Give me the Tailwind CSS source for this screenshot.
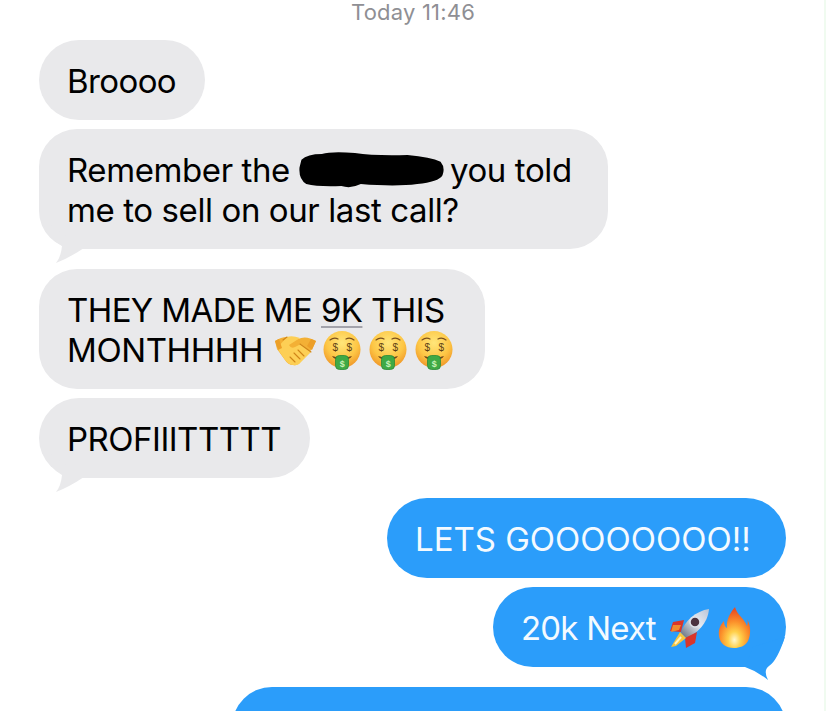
<!doctype html>
<html>
<head>
<meta charset="utf-8">
<script src="https://cdn.jsdelivr.net/npm/@tailwindcss/browser@4"></script>
</head>
<body class="bg-white">
<svg width="0" height="0" class="absolute">
  <defs>
    <radialGradient id="fg" cx="50%" cy="32%" r="70%">
      <stop offset="0" stop-color="#ffe67a"/><stop offset=".6" stop-color="#fdc645"/><stop offset="1" stop-color="#ee9226"/>
    </radialGradient>
    <radialGradient id="fl" cx="50%" cy="80%" r="72%">
      <stop offset="0" stop-color="#fff8cf"/><stop offset=".28" stop-color="#ffd04a"/><stop offset=".62" stop-color="#fb8f2a"/><stop offset="1" stop-color="#ea4f22"/>
    </radialGradient>
    <linearGradient id="rk" x1="1" y1="0" x2="0" y2="1">
      <stop offset="0" stop-color="#b9c4d6"/><stop offset=".45" stop-color="#e6eaf1"/><stop offset="1" stop-color="#5f6979"/>
    </linearGradient>
    <symbol id="money" viewBox="0 0 38 40">
      <circle cx="19" cy="19.500" r="18.500" fill="url(#fg)"/>
      <path d="M7 10q4-3 8-1M23 9q4-2 8 1" stroke="#7a4f1e" stroke-width="1.200" fill="none" stroke-linecap="round"/>
      <text x="12" y="21" font-size="10" font-family="Liberation Sans" text-anchor="middle" fill="#5e3f14">$</text>
      <text x="26" y="21" font-size="10" font-family="Liberation Sans" text-anchor="middle" fill="#5e3f14">$</text>
      <path d="M9 26q10 3 20 0q-2 4-10 4t-10-4z" fill="#6f4318"/>
      <rect x="12.500" y="25.500" width="13" height="14" rx="4" fill="#3fa945" stroke="#2b8a36" stroke-width=".8"/>
      <text x="19" y="36.500" font-size="9" font-family="Liberation Sans" font-weight="700" text-anchor="middle" fill="#c8f2b8">$</text>
    </symbol>
  </defs>
</svg>
<main class="relative h-[711px] w-[826px] overflow-hidden bg-white font-['Inter','Liberation_Sans',sans-serif] text-[33px] leading-[40px] tracking-[-0.4px] text-black">
  <div class="h-[40px] text-center text-[22px] leading-[25px] tracking-[0.2px] text-[#8f8f94]">Today 11:46</div>

  <div class="flex flex-col items-start pl-[39px]">
    <div class="flex h-[80px] w-[166px] items-center rounded-[40px] bg-[#e9e9eb] pl-[28px] pt-[2px] tracking-[-0.6px]">Broooo</div>

    <div class="relative mt-[9px] h-[120px] w-[569px] rounded-[38px] bg-[#e9e9eb] pl-[28px] pt-[21px]">
      <div class="flex items-center">Remember the
        <svg class="ml-[5px] mr-[2px] block h-[36px] w-[153px] shrink-0" viewBox="0 0 150 37"><path d="M3 8Q9 2 24 2Q34-1 58 1Q78 4 112 3Q136 5 146 10Q151 16 148 24Q144 31 122 33Q100 36 64 33Q54 38 44 35Q20 36 8 33Q0 28 1 16Z" fill="#000"/></svg>
        you told</div>
      <div>me to sell on our last call?</div>
      <svg class="absolute left-0 top-[90px] h-[44px] w-[60px]" viewBox="0 0 60 44"><path d="M2 0Q10 20 23 27Q22 38 17 44Q30 39 45 29Z" fill="#e9e9eb"/></svg>
    </div>

    <div class="mt-[20px] h-[120px] w-[446px] rounded-[38px] bg-[#e9e9eb] pl-[28px] pt-[21px]">
      <div class="tracking-[-0.6px]">THEY MADE ME <span class="underline decoration-[#a3a3ab] decoration-2 underline-offset-[4px]">9K</span> THIS</div>
      <div class="flex items-center">MONTHHHH
        <svg class="ml-[11px] mr-[6px] h-[32px] w-[43px]" viewBox="0 0 43 32">
          <path d="M1 7Q7 3 13 3Q18 6 24 5Q32 1 42 7L38 15L27 27Q24 32 19 31Q14 31 11 26L3 15Z" fill="#f3b035"/>
          <path d="M13 3Q18 1 26 4L15 11Q17 15 21 13L27 10L37 18L27 28Q24 32 19 31Q13 30 9 23L3 14Z" fill="#fdcf55"/>
          <path d="M26 10L37 18M16 23L21 28M20 19L26 25M24 16L30 22M13 3L9 6" stroke="#d08519" stroke-width="1.100" fill="none" stroke-linecap="round"/>
          <path d="M1 7L5 5L8 14L4 16ZM42 7L37 5L33 12L38 16Z" fill="#ec9f28"/>
        </svg>
        <svg class="h-[40px] w-[38px]"><use href="#money"/></svg>
        <svg class="ml-[8px] h-[40px] w-[38px]"><use href="#money"/></svg>
        <svg class="ml-[8px] h-[40px] w-[38px]"><use href="#money"/></svg>
      </div>
    </div>

    <div class="relative mt-[9px] flex h-[80px] w-[271px] items-center rounded-[40px] bg-[#e9e9eb] pl-[28px] pt-[2px] tracking-[-0.5px]">PROFIIITTTTT
      <svg class="absolute left-0 top-[50px] h-[44px] w-[60px]" viewBox="0 0 60 44"><path d="M2 0Q10 20 23 27Q22 38 17 44Q30 39 45 29Z" fill="#e9e9eb"/></svg>
    </div>
  </div>

  <div class="mt-[20px] flex flex-col items-end pr-[40px] text-[#f4faff]">
    <div class="flex h-[80px] w-[399px] items-center rounded-[40px] bg-[#2b9dfa] pl-[28px] pt-[2px] tracking-normal">LETS GOOOOOOOO!!</div>
    <div class="relative mt-[9px] flex h-[80px] w-[293px] items-center rounded-[40px] bg-[#2b9dfa] pl-[28px] pt-[2px] tracking-[-0.8px]">20k Next
      <svg class="ml-[14px] h-[40px] w-[40px]" viewBox="0 0 40 40">
        <path d="M11 25C14 13 26 3 39 1C38 15 27 26 16 30Z" fill="url(#rk)"/>
        <circle cx="25" cy="14" r="5" fill="#4b3340" stroke="#dfe3ea" stroke-width="1.500"/>
        <path d="M14 12L3 14L0 23L11 24Z" fill="#d9362b"/>
        <path d="M27 24L25 35L16 40L15 30Z" fill="#d9362b"/>
        <path d="M10 24L16 30L6 38L1 39Z" fill="#f7c53e"/>
        <path d="M3 17L11 17L9 22L1 24Z" fill="#f28a2e"/>
        <path d="M5 36L11 29" stroke="#fff3c2" stroke-width="2"/>
      </svg>
      <svg class="ml-[8px] h-[42px] w-[33px]" viewBox="0 0 33 42">
        <path d="M17 0C19 8 26 11 29 19C30 16 30 14 29 12C33 18 33 28 30 34C27 39 22 41 16 41C8 41 2 37 1 29C0 22 3 17 6 14C6 17 7 20 9 21C8 13 12 6 17 0Z" fill="url(#fl)"/>
      </svg>
      <svg class="absolute left-[250px] top-[50px] h-[44px] w-[45px]" viewBox="0 0 45 44"><path d="M2 30Q14 34 25 43Q20 33 26 29Q34 24 42 0L10 10Z" fill="#2b9dfa"/></svg>
    </div>
    <div class="mt-[20px] h-[120px] w-[554px] rounded-[40px] bg-[#2b9dfa]"></div>
  </div>
  <div class="absolute inset-y-0 right-0 w-[2px] bg-[#f0fbf0]"></div>
</main>
</body>
</html>
